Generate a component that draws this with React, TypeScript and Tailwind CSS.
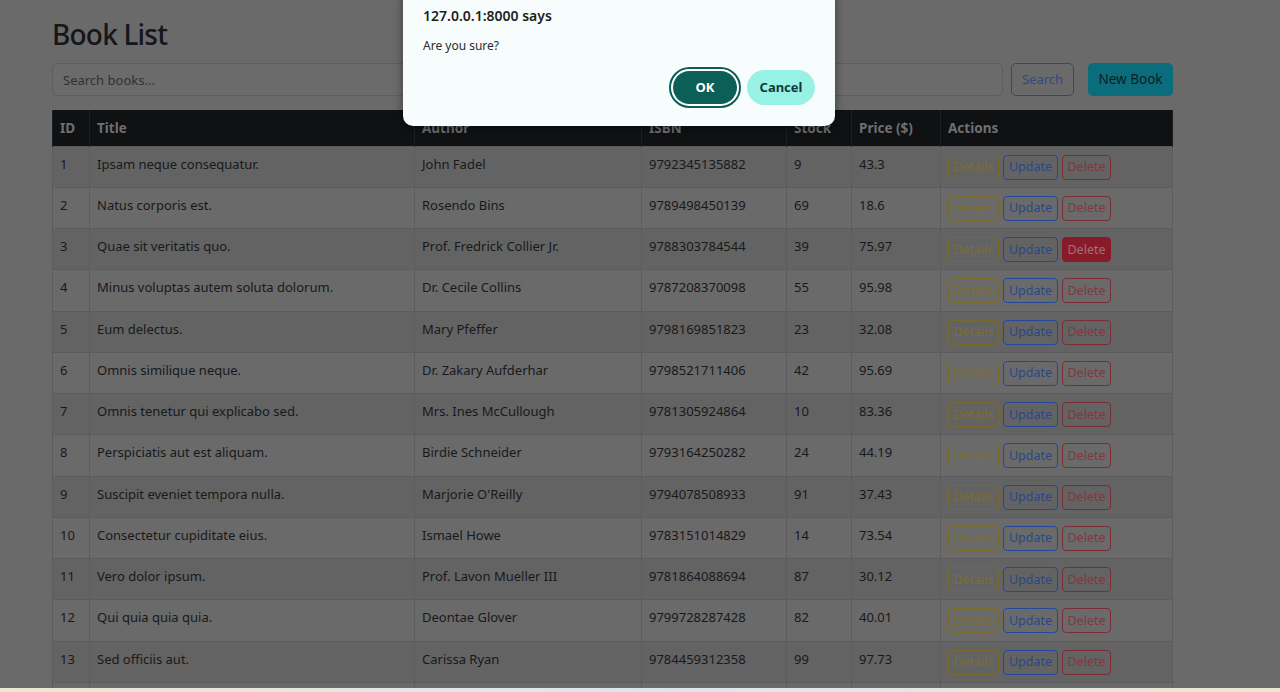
import React from 'react';

type Book = {
  id: number;
  title: string;
  author: string;
  isbn: string;
  stock: number;
  price: string;
};

const books: Book[] = [
  { id: 1, title: 'Ipsam neque consequatur.', author: 'John Fadel', isbn: '9792345135882', stock: 9, price: '43.3' },
  { id: 2, title: 'Natus corporis est.', author: 'Rosendo Bins', isbn: '9789498450139', stock: 69, price: '18.6' },
  { id: 3, title: 'Quae sit veritatis quo.', author: 'Prof. Fredrick Collier Jr.', isbn: '9788303784544', stock: 39, price: '75.97' },
  { id: 4, title: 'Minus voluptas autem soluta dolorum.', author: 'Dr. Cecile Collins', isbn: '9787208370098', stock: 55, price: '95.98' },
  { id: 5, title: 'Eum delectus.', author: 'Mary Pfeffer', isbn: '9798169851823', stock: 23, price: '32.08' },
  { id: 6, title: 'Omnis similique neque.', author: 'Dr. Zakary Aufderhar', isbn: '9798521711406', stock: 42, price: '95.69' },
  { id: 7, title: 'Omnis tenetur qui explicabo sed.', author: 'Mrs. Ines McCullough', isbn: '9781305924864', stock: 10, price: '83.36' },
  { id: 8, title: 'Perspiciatis aut est aliquam.', author: 'Birdie Schneider', isbn: '9793164250282', stock: 24, price: '44.19' },
  { id: 9, title: 'Suscipit eveniet tempora nulla.', author: "Marjorie O'Reilly", isbn: '9794078508933', stock: 91, price: '37.43' },
  { id: 10, title: 'Consectetur cupiditate eius.', author: 'Ismael Howe', isbn: '9783151014829', stock: 14, price: '73.54' },
  { id: 11, title: 'Vero dolor ipsum.', author: 'Prof. Lavon Mueller III', isbn: '9781864088694', stock: 87, price: '30.12' },
  { id: 12, title: 'Qui quia quia quia.', author: 'Deontae Glover', isbn: '9799728287428', stock: 82, price: '40.01' },
  { id: 13, title: 'Sed officiis aut.', author: 'Carissa Ryan', isbn: '9784459312358', stock: 99, price: '97.73' },
];

const cell = 'border border-[#5c5c5c] px-[7px] pt-[8px] align-top leading-[18px]';

const Row = ({ book, odd }: { book: Book; odd: boolean }) => (
  <tr className={`h-[41.25px] ${odd ? 'bg-[#636363]' : 'bg-[#6a6a6a]'}`}>
    <td className={cell}>{book.id}</td>
    <td className={cell}>{book.title}</td>
    <td className={cell}>{book.author}</td>
    <td className={cell}>{book.isbn}</td>
    <td className={cell}>{book.stock}</td>
    <td className={cell}>{book.price}</td>
    <td className={cell}>
      <div className="flex gap-[4px] text-[12.5px]">
        <button className="h-[25px] w-[51px] rounded-[4px] border border-[#7a6a2a] text-[#7c6e30]">Details</button>
        <button className="h-[25px] w-[55px] rounded-[4px] border border-[#24489a] text-[#29488a]">Update</button>
        {book.id === 3 ? (
          <button className="h-[25px] w-[49px] rounded-[4px] border border-[#891a29] bg-[#891a29] text-[#a07078]">Delete</button>
        ) : (
          <button className="h-[25px] w-[49px] rounded-[4px] border border-[#7c2c37] text-[#853641]">Delete</button>
        )}
      </div>
    </td>
  </tr>
);

export default function App() {
  return (
    <div
      className="relative flex h-[692px] w-[1280px] flex-col overflow-hidden bg-[#6a6a6a] text-[#18191b]"
      style={{ fontFamily: '"Noto Sans", "Open Sans", sans-serif' }}
    >
      <div className="flex-1 overflow-hidden pl-[52px]">
        <div className="w-[1121px]">
          <h2 className="pt-[14px] text-[28px] font-medium leading-[40px] tracking-[-0.8px] text-[#151618]">Book List</h2>

          <div className="mt-[9px] flex items-center">
            <input
              className="h-[33px] w-[951px] rounded-[5px] border border-[#5e5e5e] bg-[#6b6b6b] px-[10px] text-[13px] placeholder:text-[#303236] outline-none"
              placeholder="Search books..."
            />
            <button className="ml-[8px] h-[33px] w-[63px] rounded-[5px] border border-[#2a4890] text-[13px] text-[#2e4a80]">Search</button>
            <button className="ml-[14px] h-[33px] w-[85px] rounded-[5px] bg-[#0b6d7b] text-[13.5px] text-[#0a1f24]">New Book</button>
          </div>

          <table className="mt-[14px] w-[1121px] border-collapse text-left text-[13px]">
            <thead>
              <tr className="h-[36px] bg-[#101113] text-[13.5px] font-bold text-[#6e6f71]">
                <th className="w-[37px] border-x border-[#1d1e21] px-[7px]">ID</th>
                <th className="w-[325px] border-x border-[#1d1e21] px-[7px]">Title</th>
                <th className="w-[227px] border-x border-[#1d1e21] px-[7px]">Author</th>
                <th className="w-[145px] border-x border-[#1d1e21] px-[7px]">ISBN</th>
                <th className="w-[65px] border-x border-[#1d1e21] px-[7px]">Stock</th>
                <th className="w-[89px] border-x border-[#1d1e21] px-[7px]">Price ($)</th>
                <th className="border-x border-[#1d1e21] px-[7px]">Actions</th>
              </tr>
            </thead>
            <tbody>
              {books.map((b, i) => (
                <Row key={b.id} book={b} odd={i % 2 === 0} />
              ))}
              <tr className="h-[41.25px] bg-[#6a6a6a]">
                <td className={cell}></td>
                <td className={cell}></td>
                <td className={cell}></td>
                <td className={cell}></td>
                <td className={cell}></td>
                <td className={cell}></td>
                <td className={cell}></td>
              </tr>
            </tbody>
          </table>
        </div>
      </div>

      <div className="h-[4px] bg-gradient-to-r from-[#efe6d4] via-[#dde6ee] to-[#efe5d3]" />

      {/* browser confirm dialog */}
      <div className="absolute left-[403px] top-[-12px] h-[138px] w-[432px] rounded-[10px] bg-[#f7fdfc] shadow-[0_2px_10px_rgba(0,0,0,0.45)]">
        <div className="px-[20px] pt-[18px]">
          <div className="text-[14px] font-semibold leading-[20px] text-[#1e1f21]">127.0.0.1:8000 says</div>
          <div className="mt-[12px] text-[12px] leading-[16px] text-[#2a2b2d]">Are you sure?</div>
        </div>
        <div className="absolute right-[20px] top-[79px] flex items-center gap-[6px]">
          <button className="h-[41px] w-[72px] rounded-full border-2 border-[#0c5d56] bg-white p-[2px]">
            <span className="flex h-full w-full items-center justify-center rounded-full bg-[#0b5f57] text-[13px] font-bold text-white">OK</span>
          </button>
          <button className="h-[35px] w-[68px] rounded-full bg-[#98f1e5] text-[13px] font-bold text-[#0e3b37]">Cancel</button>
        </div>
      </div>
    </div>
  );
}
